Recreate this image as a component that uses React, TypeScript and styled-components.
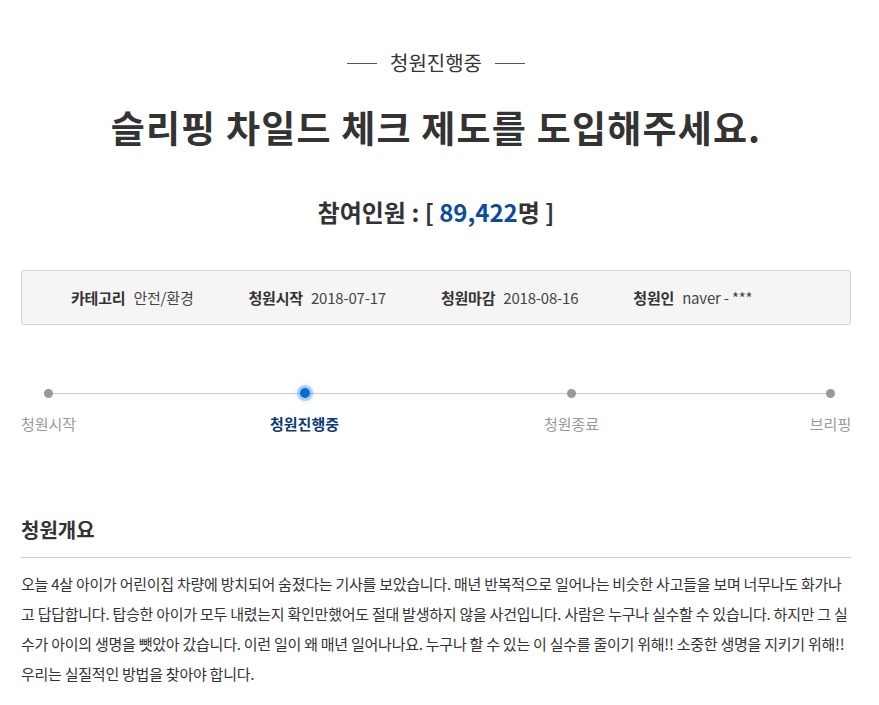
import React from "react";
import styled, { createGlobalStyle } from "styled-components";

const GlobalStyle = createGlobalStyle`
  html, body {
    margin: 0;
    padding: 0;
    background: #fff;
  }
  body {
    font-family: "Noto Sans CJK KR", "Noto Sans", sans-serif;
    color: #333;
  }
  * {
    box-sizing: border-box;
  }
`;

const PageContainer = styled.div`
  width: 830px;
  margin: 0 0 0 21px;
  padding-top: 48px;
`;
const StatusTitle = styled.div`
  display: flex;
  align-items: center;
  justify-content: center;
  gap: 13px;
  font-size: 20px;
  line-height: 30px;
  color: #333;
  &::before,
  &::after {
    content: "";
    width: 30px;
    height: 1px;
    background: #555;
  }
`;
const PetitionTitle = styled.h1`
  margin: 23px 0 0;
  text-align: center;
  font-size: 37px;
  line-height: 52px;
  font-weight: bold;
  color: #333;
  letter-spacing: 1.2px;
`;
const CountLine = styled.div`
  margin-top: 41px;
  text-align: center;
  font-size: 24px;
  line-height: 36px;
  font-weight: bold;
  color: #333;
`;
const CountNumber = styled.span`
  color: #0b4d9c;
`;
const InfoBox = styled.div`
  display: flex;
  align-items: center;
  gap: 55px;
  height: 55px;
  margin-top: 40px;
  padding: 0 49px;
  background: #f5f5f5;
  border: 1px solid #d5d5d5;
  border-radius: 3px;
`;
const InfoItem = styled.div`
  display: flex;
  align-items: center;
  gap: 8px;
  font-size: 15px;
  letter-spacing: -0.2px;
`;
const InfoLabel = styled.span`
  font-weight: bold;
  color: #333;
`;
const InfoValue = styled.span`
  color: #444;
`;
const Steps = styled.div`
  position: relative;
  display: grid;
  grid-template-columns: 55px 194px 69px 205px 55px 1fr 41px;
  margin-top: 60px;
  &::before {
    content: "";
    position: absolute;
    top: 8px;
    left: 27px;
    right: 21px;
    height: 1px;
    background: #ccc;
  }
`;
const Step = styled.div<{ $col: number }>`
  position: relative;
  grid-column: ${(p) => p.$col};
  display: flex;
  flex-direction: column;
  align-items: center;
  gap: 12px;
  white-space: nowrap;
`;
const DotSlot = styled.div`
  display: flex;
  align-items: center;
  justify-content: center;
  height: 16px;
`;
const Dot = styled.span<{ $active?: boolean }>`
  display: block;
  width: ${(p) => (p.$active ? "10px" : "9px")};
  height: ${(p) => (p.$active ? "10px" : "9px")};
  border-radius: 50%;
  background: ${(p) => (p.$active ? "#0a6ad6" : "#999")};
  box-shadow: ${(p) =>
    p.$active
      ? "0 0 0 3px rgba(60, 150, 240, 0.35), 0 0 4px 4px rgba(60, 150, 240, 0.15)"
      : "none"};
`;
const StepLabel = styled.span<{ $active?: boolean }>`
  font-size: 15px;
  line-height: 22px;
  font-weight: ${(p) => (p.$active ? "bold" : "normal")};
  color: ${(p) => (p.$active ? "#0b3b77" : "#999")};
`;
const SectionTitle = styled.h2`
  margin: 80px 0 0;
  padding-bottom: 12px;
  border-bottom: 1px solid #ccc;
  font-size: 20px;
  line-height: 30px;
  font-weight: bold;
  color: #333;
`;
const Paragraph = styled.p`
  margin: 11px 0 0;
  font-size: 15px;
  line-height: 30px;
  color: #333;
  letter-spacing: -0.25px;
  word-break: break-all;
`;

const info = [
  { label: "카테고리", value: "안전/환경" },
  { label: "청원시작", value: "2018-07-17" },
  { label: "청원마감", value: "2018-08-16" },
  { label: "청원인", value: "naver - ***" },
];

const steps = [
  { label: "청원시작", active: false, col: 1 },
  { label: "청원진행중", active: true, col: 3 },
  { label: "청원종료", active: false, col: 5 },
  { label: "브리핑", active: false, col: 7 },
];

const body =
  "오늘 4살 아이가 어린이집 차량에 방치되어 숨졌다는 기사를 보았습니다. 매년 반복적으로 일어나는 비슷한 사고들을 보며 너무나도 화가나고 답답합니다. 탑승한 아이가 모두 내렸는지 확인만했어도 절대 발생하지 않을 사건입니다. 사람은 누구나 실수할 수 있습니다. 하지만 그 실수가 아이의 생명을 뺏았아 갔습니다. 이런 일이 왜 매년 일어나나요. 누구나 할 수 있는 이 실수를 줄이기 위해!! 소중한 생명을 지키기 위해!!";

const App: React.FC = () => {
  return (
    <>
      <GlobalStyle />
      <PageContainer>
        <StatusTitle>청원진행중</StatusTitle>
        <PetitionTitle>슬리핑 차일드 체크 제도를 도입해주세요.</PetitionTitle>
        <CountLine>
          참여인원 : [ <CountNumber>89,422</CountNumber>명 ]
        </CountLine>
        <InfoBox>
          {info.map((i) => (
            <InfoItem key={i.label}>
              <InfoLabel>{i.label}</InfoLabel>
              <InfoValue>{i.value}</InfoValue>
            </InfoItem>
          ))}
        </InfoBox>
        <Steps>
          {steps.map((s) => (
            <Step key={s.label} $col={s.col}>
              <DotSlot>
                <Dot $active={s.active} />
              </DotSlot>
              <StepLabel $active={s.active}>{s.label}</StepLabel>
            </Step>
          ))}
        </Steps>
        <SectionTitle>청원개요</SectionTitle>
        <Paragraph>
          {body}
          <br />
          우리는 실질적인 방법을 찾아야 합니다.
        </Paragraph>
      </PageContainer>
    </>
  );
};

export default App;
